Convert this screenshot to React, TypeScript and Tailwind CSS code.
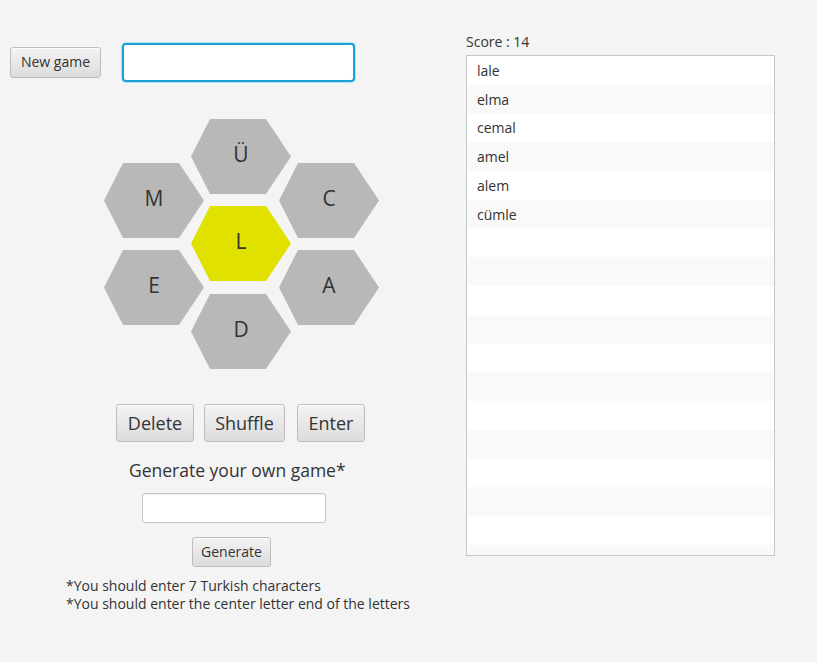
import { useState } from 'react';

const hexes = [
  { letter: 'Ü', left: 87, top: 0, center: false },
  { letter: 'M', left: 0, top: 44, center: false },
  { letter: 'C', left: 175, top: 44, center: false },
  { letter: 'L', left: 87, top: 87, center: true },
  { letter: 'E', left: 0, top: 131, center: false },
  { letter: 'A', left: 175, top: 131, center: false },
  { letter: 'D', left: 87, top: 175, center: false },
];

const words = ['lale', 'elma', 'cemal', 'amel', 'alem', 'cümle'];

const font = { fontFamily: '"Open Sans", "Noto Sans", "Liberation Sans", sans-serif' };

const btn =
  'rounded-[3px] border border-[#bdbdbd] bg-gradient-to-b from-[#f3f3f3] to-[#dcdcdc] text-[#333] shadow-[inset_0_1px_0_#fff] leading-none';

export default function App() {
  const [guess, setGuess] = useState('');
  const [custom, setCustom] = useState('');
  const rows = Array.from({ length: 18 }, (_, i) => words[i] ?? '');

  return (
    <div className="w-[817px] h-[662px] bg-[#f4f4f4] flex overflow-hidden" style={font}>
      {/* left side: game */}
      <div className="w-[466px] flex flex-col">
        <div className="flex items-center pt-[43px]">
          <button className={`${btn} ml-[10px] w-[91px] h-[31px] text-[14px] pb-[1px]`}>New game</button>
          <input
            value={guess}
            onChange={(e) => setGuess(e.target.value)}
            className="ml-[21px] w-[233px] h-[39px] rounded-[4px] bg-white border-2 border-[#1ba1d6] shadow-[0_0_0_1px_#b8e0f1] outline-none px-2 text-[16px]"
          />
        </div>

        <div className="relative ml-[104px] mt-[37px] w-[275px] h-[251px]">
          {hexes.map((h) => (
            <div
              key={h.letter}
              className={`absolute w-[100px] h-[75px] flex items-center justify-center pb-[3px] text-[21px] text-[#333] [clip-path:polygon(19%_0,75%_0,100%_50%,75%_100%,19%_100%,0_50%)] ${
                h.center ? 'bg-[#e1e100]' : 'bg-[#b8b8b8]'
              }`}
              style={{ left: h.left, top: h.top }}
            >
              {h.letter}
            </div>
          ))}
        </div>

        <div className="flex mt-[34px] ml-[116px]">
          <button className={`${btn} w-[78px] h-[38px] text-[18px] pb-[1px]`}>Delete</button>
          <button className={`${btn} ml-[10px] w-[81px] h-[38px] text-[18px] pb-[1px]`}>Shuffle</button>
          <button className={`${btn} ml-[12px] w-[68px] h-[38px] text-[18px] pb-[1px]`}>Enter</button>
        </div>

        <div className="mt-[16px] ml-[129px] text-[17.5px] leading-[24px] text-[#333] whitespace-nowrap">
          Generate your own game*
        </div>

        <input
          value={custom}
          onChange={(e) => setCustom(e.target.value)}
          className="mt-[11px] ml-[142px] w-[184px] h-[30px] rounded-[3px] bg-white border border-[#c6c6c6] shadow-[inset_0_1px_1px_#eee] outline-none px-2 text-[14px]"
        />

        <button className={`${btn} mt-[14px] ml-[192px] w-[79px] h-[30px] text-[14px] pb-[1px]`}>Generate</button>

        <div className="mt-[10px] ml-[66px] text-[14px] leading-[18px] text-[#333] whitespace-nowrap">
          <p>*You should enter 7 Turkish characters</p>
          <p>*You should enter the center letter end of the letters</p>
        </div>
      </div>

      {/* right side: score and found words */}
      <div className="flex flex-col">
        <div className="pt-[32px] h-[55px] text-[14px] leading-[19px] text-[#333]">Score : 14</div>
        <div className="w-[309px] h-[501px] border border-[#c8c8c8] bg-white overflow-hidden">
          {rows.map((w, i) => (
            <div
              key={i}
              className={`h-[28.75px] flex items-center pl-[10px] text-[14px] text-[#333] ${
                i % 2 === 1 ? 'bg-[#f9f9f9]' : 'bg-white'
              }`}
            >
              {w}
            </div>
          ))}
        </div>
      </div>
    </div>
  );
}
